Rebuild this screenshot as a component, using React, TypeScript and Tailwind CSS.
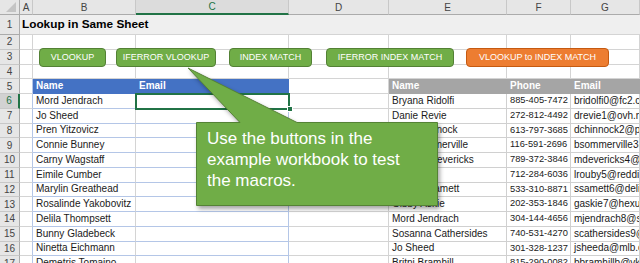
import React from 'react';

const COLS = ['A', 'B', 'C', 'D', 'E', 'F', 'G'];

const leftNames = [
  'Mord Jendrach',
  'Jo Sheed',
  'Pren Yitzovicz',
  'Connie Bunney',
  'Carny Wagstaff',
  'Eimile Cumber',
  'Marylin Greathead',
  'Rosalinde Yakobovitz',
  'Delila Thompsett',
  'Bunny Gladebeck',
  'Ninetta Eichmann',
  'Demetris Tomaino',
];

const rightRows = [
  ['Bryana Ridolfi', '885-405-7472', 'bridolfi0@fc2.com'],
  ['Danie Revie', '272-812-4492', 'drevie1@ovh.net'],
  ['Dom Chinnock', '613-797-3685', 'dchinnock2@pbs.org'],
  ['Bert Sommerville', '116-591-2696', 'bsommerville3@ft.com'],
  ['Mabelle Devericks', '789-372-3846', 'mdevericks4@free.fr'],
  ['Lin Rouby', '712-284-6036', 'lrouby5@reddit.com'],
  ['Shelley Samett', '533-310-8871', 'ssamett6@delicious.com'],
  ['Gibby Askie', '202-353-1846', 'gaskie7@hexun.com'],
  ['Mord Jendrach', '304-144-4656', 'mjendrach8@senate.gov'],
  ['Sosanna Cathersides', '740-531-4270', 'scathersides9@wp.com'],
  ['Jo Sheed', '301-328-1237', 'jsheeda@mlb.com'],
  ['Britni Bramhill', '815-290-0082', 'bbramhillb@vk.com'],
];

const buttons = [
  { label: 'VLOOKUP', cls: 'left-[39px] w-[67px] bg-[#70ad47] border-[#538135]' },
  { label: 'IFERROR VLOOKUP', cls: 'left-[116px] w-[100px] bg-[#70ad47] border-[#538135]' },
  { label: 'INDEX MATCH', cls: 'left-[229px] w-[83px] bg-[#70ad47] border-[#538135]' },
  { label: 'IFERROR INDEX MATCH', cls: 'left-[326px] w-[128px] bg-[#70ad47] border-[#538135]' },
  { label: 'VLOOKUP to INDEX MATCH', cls: 'left-[466px] w-[143px] bg-[#ed7d31] border-[#c55a11]' },
];

function cellText(r: number, c: string): { text: string; cls: string } {
  const base = 'border-r border-b border-[#d4d4d4] bg-white';
  // left table B5:C17
  if (r >= 5 && (c === 'B' || c === 'C')) {
    if (r === 5) {
      return {
        text: c === 'B' ? 'Name' : 'Email',
        cls: 'border-r border-b border-[#4472c4] bg-[#4472c4] text-white font-bold',
      };
    }
    const text = c === 'B' ? leftNames[r - 6] ?? '' : '';
    const right = c === 'C' ? 'border-r-[#b4c6e7]' : 'border-r-[#d4d4d4]';
    return { text, cls: `border-r border-b border-b-[#b4c6e7] ${right} bg-white` };
  }
  if (r >= 5 && c === 'A') {
    return { text: '', cls: 'border-r border-b border-b-[#d4d4d4] border-r-[#b4c6e7] bg-white' };
  }
  // right table E5:G17
  if (r >= 5 && (c === 'E' || c === 'F' || c === 'G')) {
    const idx = c === 'E' ? 0 : c === 'F' ? 1 : 2;
    if (r === 5) {
      return {
        text: ['Name', 'Phone', 'Email'][idx],
        cls: 'border-r border-b border-[#a5a5a5] bg-[#a5a5a5] text-white font-bold',
      };
    }
    const size = c === 'F' ? 'text-[9.3px]' : '';
    return { text: rightRows[r - 6]?.[idx] ?? '', cls: `border-r border-b border-[#d0d0d0] bg-white ${size}` };
  }
  return { text: '', cls: base };
}

export default function App() {
  const rows = Array.from({ length: 16 }, (_, i) => i + 2);

  return (
    <div className="relative w-[640px] h-[263px] overflow-hidden bg-white font-['Liberation_Sans',Arial,sans-serif] text-[10px] text-[#1a1a1a]">
      <div className="grid grid-cols-[20px_13px_103px_153px_100px_118px_64px_69px] grid-rows-[15px_20px_repeat(16,14.75px)]">
        {/* corner */}
        <div className="relative border-r border-b border-[#ababab] bg-[#e6e6e6]">
          <svg className="absolute right-[3px] bottom-[2px]" width="10" height="10" viewBox="0 0 10 10">
            <polygon points="10,0 10,10 0,10" fill="#c4c4c4" />
          </svg>
        </div>
        {COLS.map((c) => (
          <div
            key={c}
            className={
              c === 'C'
                ? 'flex items-center justify-center border-r border-r-[#c8c8c8] border-b-2 border-b-[#217346] bg-[#dcdcdc] text-[#217346]'
                : 'flex items-center justify-center border-r border-r-[#c8c8c8] border-b border-b-[#ababab] bg-[#e6e6e6] text-[#444]'
            }
          >
            {c}
          </div>
        ))}

        {/* row 1 */}
        <div className="flex items-center justify-center border-r border-b border-[#ababab] bg-[#e6e6e6] text-[#444]">
          1
        </div>
        <div className="col-span-7 flex items-center pl-[2px] border-b border-[#d4d4d4] bg-[#efefef] text-[11.8px] font-bold text-black whitespace-nowrap">
          Lookup in Same Sheet
        </div>

        {rows.map((r) => (
          <React.Fragment key={r}>
            <div
              className={
                r === 6
                  ? 'flex items-center justify-center border-r-2 border-r-[#217346] border-b border-b-[#c8c8c8] bg-[#d2d2d2] text-[#217346]'
                  : 'flex items-center justify-center border-r border-r-[#ababab] border-b border-b-[#c8c8c8] bg-[#e6e6e6] text-[#444]'
              }
            >
              {r}
            </div>
            {COLS.map((c) => {
              const cell = cellText(r, c);
              return (
                <div
                  key={c}
                  className={`flex items-center pl-[3px] overflow-hidden whitespace-nowrap leading-none ${cell.cls}`}
                >
                  {cell.text}
                </div>
              );
            })}
          </React.Fragment>
        ))}
      </div>

      {/* active cell C6 */}
      <div className="absolute left-[135px] top-[93px] w-[155px] h-[17px] border-2 border-[#217346]" />
      <div className="absolute left-[287px] top-[106px] w-[6px] h-[6px] bg-[#217346] border border-white" />

      {/* macro buttons */}
      {buttons.map((b) => (
        <div
          key={b.label}
          className={`absolute top-[48px] h-[19px] rounded-[4px] border flex items-center justify-center text-white text-[9px] whitespace-nowrap ${b.cls}`}
        >
          {b.label}
        </div>
      ))}

      {/* callout */}
      <svg
        className="absolute left-0 top-0 pointer-events-none drop-shadow-[2px_3px_2px_rgba(0,0,0,0.35)]"
        width="640"
        height="263"
        viewBox="0 0 640 263"
      >
        <polygon
          points="196.5,122.5 240,122.5 188,68 297,122.5 437.5,122.5 437.5,205.5 196.5,205.5"
          fill="#70ad47"
          stroke="#548235"
          strokeWidth="1"
        />
      </svg>
      <div className="absolute left-[207px] top-[128px] text-[17px] leading-[21px] text-white whitespace-nowrap">
        Use the buttons in the
        <br />
        example workbook to test
        <br />
        the macros.
      </div>
    </div>
  );
}
